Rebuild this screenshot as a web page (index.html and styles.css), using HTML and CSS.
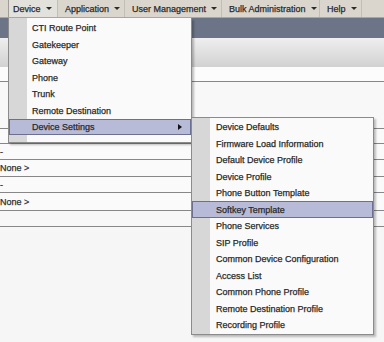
FILE: index.html
```html
<!DOCTYPE html>
<html>
<head>
<meta charset="utf-8">
<link rel="stylesheet" href="styles.css">
</head>
<body>
<div class="app">
  <nav class="menubar">
    <div class="mb-lead"></div>
    <div class="mb-item open"><span>Device</span><i class="caret"></i></div>
    <div class="mb-item"><span>Application</span><i class="caret"></i></div>
    <div class="mb-item"><span>User Management</span><i class="caret"></i></div>
    <div class="mb-item"><span>Bulk Administration</span><i class="caret"></i></div>
    <div class="mb-item"><span>Help</span><i class="caret"></i></div>
    <div class="mb-fill"></div>
  </nav>
  <div class="band"></div>
  <div class="header"></div>
  <div class="row r-white"></div>
  <div class="row r-tall"></div>
  <div class="row r-a"></div>
  <div class="row r-b"><span class="cell">-</span></div>
  <div class="row r-c"><span class="cell">None &gt;</span></div>
  <div class="row r-d"><span class="cell">-</span></div>
  <div class="row r-e"><span class="cell">None &gt;</span></div>
  <div class="row r-f"></div>

  <div class="menu device-menu">
    <div class="menu-item">CTI Route Point</div>
    <div class="menu-item">Gatekeeper</div>
    <div class="menu-item">Gateway</div>
    <div class="menu-item">Phone</div>
    <div class="menu-item">Trunk</div>
    <div class="menu-item">Remote Destination</div>
    <div class="menu-item active"><span>Device Settings</span><i class="sub-arrow"></i></div>
  </div>

  <div class="menu sub-menu">
    <div class="menu-item">Device Defaults</div>
    <div class="menu-item">Firmware Load Information</div>
    <div class="menu-item">Default Device Profile</div>
    <div class="menu-item">Device Profile</div>
    <div class="menu-item">Phone Button Template</div>
    <div class="menu-item active">Softkey Template</div>
    <div class="menu-item">Phone Services</div>
    <div class="menu-item">SIP Profile</div>
    <div class="menu-item">Common Device Configuration</div>
    <div class="menu-item">Access List</div>
    <div class="menu-item">Common Phone Profile</div>
    <div class="menu-item">Remote Destination Profile</div>
    <div class="menu-item">Recording Profile</div>
  </div>
</div>
</body>
</html>
```
FILE: styles.css
```css
* { box-sizing: border-box; }
html, body { margin: 0; padding: 0; }
body {
  width: 384px;
  height: 342px;
  overflow: hidden;
  background: #f5f6f5;
  font-family: "Liberation Sans", Arial, sans-serif;
  font-size: 9px;
  color: #222;
  -webkit-text-stroke: 0.25px #333;
}
.app {
  position: relative;
  width: 384px;
  height: 342px;
  overflow: hidden;
}

/* menubar */
.menubar {
  display: grid;
  grid-template-columns: 8px 50px 67px 97px 98px 42px 1fr;
  height: 18px;
  background: #dad6cd;
  border-bottom: 1px solid #aaa69d;
}
.mb-item {
  display: flex;
  align-items: center;
  padding-left: 7px;
  border-right: 1px solid #c2beb5;
  color: #222;
  white-space: nowrap;
}
.mb-item.open {
  background: #e3e1dc;
  border-left: 1px solid #a09c95;
  padding-left: 4px;
}
.caret {
  display: inline-block;
  margin-left: 5px;
  width: 0;
  height: 0;
  border-left: 3px solid transparent;
  border-right: 3px solid transparent;
  border-top: 3.5px solid #2a2a2a;
}

/* background page */
.band { height: 20px; background: #6c7588; }
.header { height: 29px; background: linear-gradient(#efefef, #d1d1d1); }
.row {
  display: flex;
  align-items: center;
  border-bottom: 1px solid #878787;
  background: #fafafa;
  white-space: nowrap;
}
.r-white { height: 15px; background: #fcfcfc; }
.r-tall { height: 47px; background: #f8f8f8; }
.r-a { height: 15px; }
.r-b { height: 16px; }
.r-c { height: 17px; }
.r-d { height: 16px; }
.r-e { height: 18px; }
.r-f { height: 16px; background: #f7f7f7; }
.cell { margin-left: 0; color: #2b2b2b; }

/* menus */
.menu {
  position: absolute;
  background: linear-gradient(to right, #d7d7d7 18px, #fafafa 18px);
  border: 1px solid #8b8b8b;
  box-shadow: 2px 2px 2px rgba(0, 0, 0, 0.25);
}
.device-menu {
  left: 8px;
  top: 18px;
  width: 184px;
  height: 125px;
  border-top: none;
  padding-top: 1.75px;
}
.sub-menu {
  left: 191px;
  top: 117px;
  width: 183px;
  height: 218px;
  padding-top: 0.75px;
}
.menu-item {
  display: flex;
  align-items: center;
  height: 16.5px;
  padding-left: 23px;
  white-space: nowrap;
  color: #222;
}
.sub-menu .menu-item { padding-left: 24px; }
.menu-item.active {
  background: #b8bbd8;
  border: 1px solid #6c7090;
  padding-left: 22px;
}
.sub-menu .menu-item.active { padding-left: 23px; }
.sub-arrow {
  margin-left: auto;
  margin-right: 8px;
  width: 0;
  height: 0;
  border-top: 3px solid transparent;
  border-bottom: 3px solid transparent;
  border-left: 4px solid #111;
}
```
